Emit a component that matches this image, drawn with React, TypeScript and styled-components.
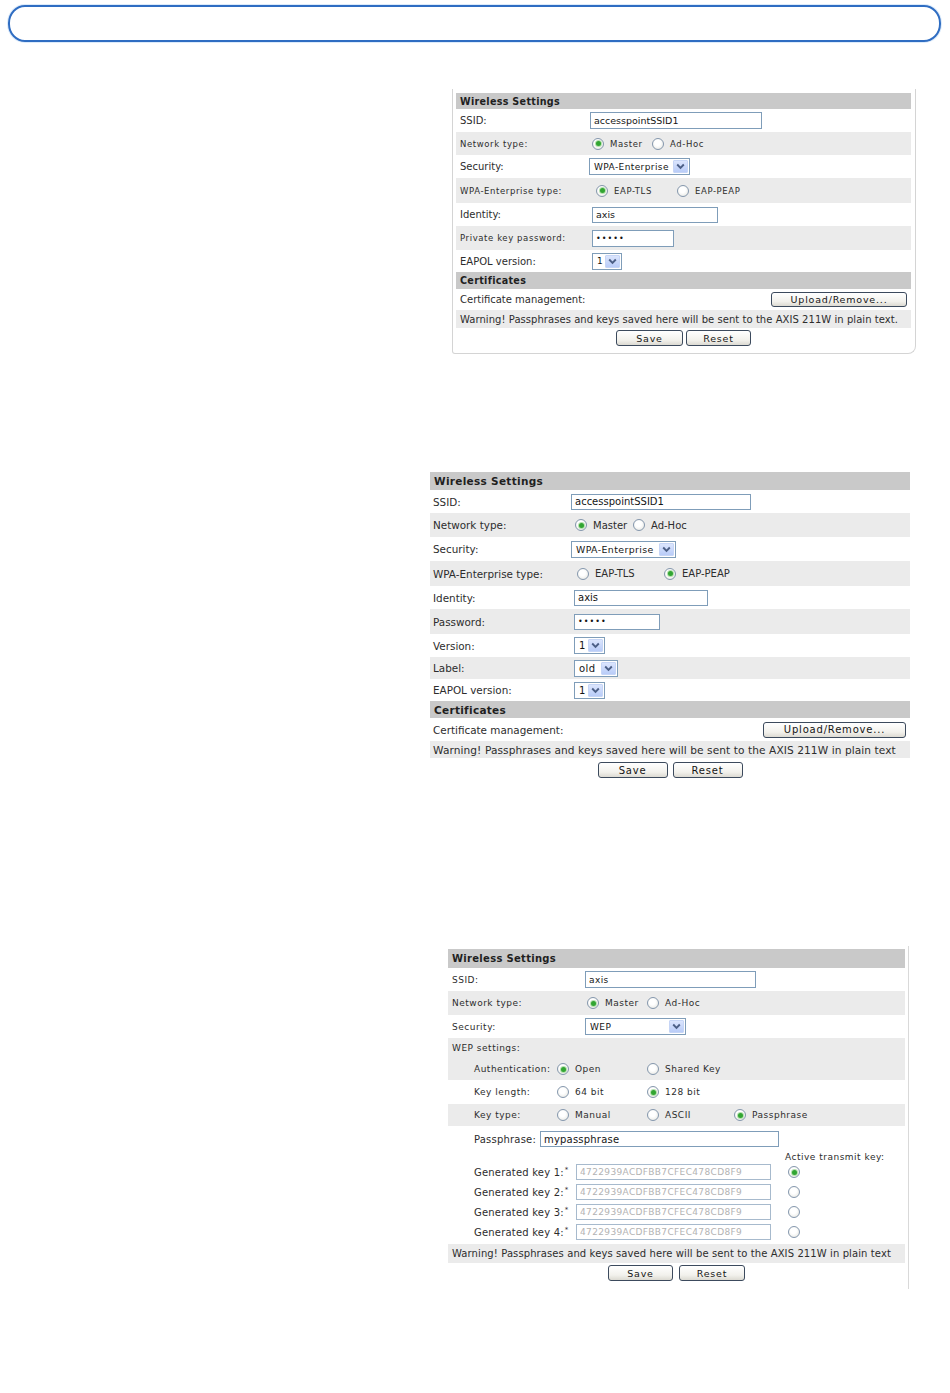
import styled, { createGlobalStyle, css } from "styled-components";

const GlobalStyle = createGlobalStyle`
  html, body {
    margin: 0;
    padding: 0;
    background: #ffffff;
  }
  body {
    font-family: "DejaVu Sans", Verdana, sans-serif;
    color: #2b2b2b;
  }
  * {
    box-sizing: border-box;
  }
`;

const Page = styled.main`
  width: 950px;
  min-height: 1393px;
  padding-top: 5px;
  overflow: hidden;
`;

const TitleBar = styled.header`
  height: 37px;
  margin: 0 9px 0 8px;
  border: 2px solid #2f6dc2;
  border-radius: 17px / 18px;
  box-shadow: 0 0 0 1px #dcebfb;
`;

const Shot = styled.section<{
  $top: number;
  $left: number;
  $width: number;
  $pad: string;
  $frame: "card" | "edge" | "none";
}>`
  margin: ${p => p.$top}px 0 0 ${p => p.$left}px;
  width: ${p => p.$width}px;
  padding: ${p => p.$pad};
  ${p =>
    p.$frame === "card" &&
    css`
      border: 1px solid #d4d4d4;
      border-top: none;
      border-radius: 0 0 8px 3px;
    `}
  ${p =>
    p.$frame === "edge" &&
    css`
      border-right: 1px solid #d9d9d9;
    `}
`;

const Bar = styled.div<{ $h: number; $size: number }>`
  display: flex;
  align-items: center;
  height: ${p => p.$h}px;
  padding-left: 4px;
  background: #c9c9c9;
  font-size: ${p => p.$size}px;
  font-weight: bold;
  letter-spacing: 0.3px;
  color: #1f1f1f;
`;

const Row = styled.div<{ $h: number; $shade?: boolean; $pad?: number; $spread?: boolean }>`
  display: flex;
  align-items: center;
  justify-content: ${p => (p.$spread ? "space-between" : "flex-start")};
  height: ${p => p.$h}px;
  padding: 0 4px 0 ${p => p.$pad ?? 4}px;
  background: ${p => (p.$shade ? "#ebebeb" : "transparent")};
`;

const Label = styled.span<{ $w?: number; $size: number; $track?: number }>`
  flex: none;
  width: ${p => (p.$w ? `${p.$w}px` : "auto")};
  font-size: ${p => p.$size}px;
  letter-spacing: ${p => p.$track ?? 0}px;
  white-space: nowrap;
  color: #2d2d2d;

  sup {
    font-size: 7px;
    vertical-align: 4px;
    margin-left: 1px;
  }
`;

const Field = styled.input<{ $w: number; $h?: number; $size: number; $track?: number; $shift?: number; $muted?: boolean }>`
  flex: none;
  width: ${p => p.$w}px;
  height: ${p => p.$h ?? 16}px;
  margin: 0 0 0 ${p => p.$shift ?? 0}px;
  padding: 0 3px;
  border: 1px solid ${p => (p.$muted ? "#a7bacd" : "#7f9db9")};
  background: #ffffff;
  font-family: inherit;
  font-size: ${p => p.$size}px;
  letter-spacing: ${p => p.$track ?? 0}px;
  color: ${p => (p.$muted ? "#b3b3b3" : "#151515")};
  outline: none;
`;

const Select = styled.div<{ $w: number; $size: number; $shift?: number }>`
  flex: none;
  display: flex;
  align-items: center;
  justify-content: space-between;
  width: ${p => p.$w}px;
  height: 17px;
  margin-left: ${p => p.$shift ?? 0}px;
  padding: 0 1px 0 4px;
  border: 1px solid #7f9db9;
  background: #ffffff;
  font-size: ${p => p.$size}px;
  letter-spacing: 0.4px;
  color: #151515;
`;

const Drop = styled.span`
  display: flex;
  align-items: center;
  justify-content: center;
  width: 15px;
  height: 13px;
  border: 1px solid #c6d5f6;
  border-radius: 1px;
  background: linear-gradient(#dbe5fd, #b9ccf8);
`;

const Option = styled.span<{ $w?: number; $size: number; $track?: number }>`
  flex: none;
  display: inline-flex;
  align-items: center;
  gap: 6px;
  width: ${p => (p.$w ? `${p.$w}px` : "auto")};
  font-size: ${p => p.$size}px;
  letter-spacing: ${p => p.$track ?? 0}px;
  white-space: nowrap;
  color: #2d2d2d;
`;

const Options = styled.span<{ $shift?: number }>`
  display: flex;
  align-items: center;
  margin-left: ${p => p.$shift ?? 0}px;
`;

const Dot = styled.span<{ $on?: boolean; $shift?: number }>`
  flex: none;
  display: flex;
  align-items: center;
  justify-content: center;
  width: 12px;
  height: 12px;
  margin-left: ${p => p.$shift ?? 0}px;
  border: 1px solid #8497ad;
  border-radius: 50%;
  background: radial-gradient(circle at 45% 40%, #ffffff 35%, #e1e1da 100%);

  &::after {
    content: "";
    width: 5px;
    height: 5px;
    border-radius: 50%;
    background: ${p => (p.$on ? "#32a532" : "transparent")};
    box-shadow: ${p => (p.$on ? "0 0 0 1px #b4e0ae" : "none")};
  }
`;

const Btn = styled.button<{ $w: number; $h?: number; $size: number }>`
  flex: none;
  width: ${p => p.$w}px;
  height: ${p => p.$h ?? 16}px;
  padding: 0;
  border: 1px solid #3c4a5d;
  border-radius: 3px;
  background: linear-gradient(#ffffff, #f2f1ec 65%, #dcdad2);
  font-family: inherit;
  font-size: ${p => p.$size}px;
  letter-spacing: 0.8px;
  line-height: 13px;
  color: #151515;
`;

const Actions = styled.div<{ $gap: number; $top: number }>`
  display: flex;
  justify-content: center;
  gap: ${p => p.$gap}px;
  margin-top: ${p => p.$top}px;
`;

const Note = styled.div<{ $h: number; $size: number; $track?: number; $pad?: number; $top?: number }>`
  display: flex;
  align-items: center;
  height: ${p => p.$h}px;
  margin-top: ${p => p.$top ?? 0}px;
  padding-left: ${p => p.$pad ?? 4}px;
  background: #ebebeb;
  font-size: ${p => p.$size}px;
  letter-spacing: ${p => p.$track ?? 0}px;
  white-space: nowrap;
  color: #2d2d2d;
`;

function Arrow() {
  return (
    <svg width="9" height="7" viewBox="0 0 9 7">
      <path d="M1.2 1.5 L4.5 4.8 L7.8 1.5" fill="none" stroke="#4c5f86" strokeWidth="1.9" />
    </svg>
  );
}

function Choice({ w, size, track, on, text }: { w?: number; size: number; track?: number; on?: boolean; text: string }) {
  return (
    <Option $w={w} $size={size} $track={track}>
      <Dot $on={on} />
      {text}
    </Option>
  );
}

function Drop1({ w, size, text, shift }: { w: number; size: number; text: string; shift?: number }) {
  return (
    <Select $w={w} $size={size} $shift={shift}>
      {text}
      <Drop>
        <Arrow />
      </Drop>
    </Select>
  );
}

const WARNING = "Warning! Passphrases and keys saved here will be sent to the AXIS 211W in plain text";
const KEY = "4722939ACDFBB7CFEC478CD8F9";

function EapTls() {
  const big = 10;
  const small = 8.5;
  const sp = 0.6;
  return (
    <Shot $top={47} $left={452} $width={464} $pad="4px 4px 7px 3px" $frame="card">
      <Bar $h={16} $size={9.6}>Wireless Settings</Bar>
      <Row $h={23}>
        <Label $w={130} $size={big}>SSID:</Label>
        <Field readOnly value="accesspointSSID1" $w={172} $h={17} $size={9.5} />
      </Row>
      <Row $h={23} $shade>
        <Label $w={130} $size={small} $track={sp}>Network type:</Label>
        <Options $shift={2}>
          <Choice w={60} size={small} track={sp} on text="Master" />
          <Choice size={small} track={sp} text="Ad-Hoc" />
        </Options>
      </Row>
      <Row $h={23}>
        <Label $w={130} $size={big}>Security:</Label>
        <Drop1 w={101} size={9} text="WPA-Enterprise" shift={-1} />
      </Row>
      <Row $h={25} $shade>
        <Label $w={130} $size={small} $track={sp}>WPA-Enterprise type:</Label>
        <Options $shift={6}>
          <Choice w={81} size={small} track={sp} on text="EAP-TLS" />
          <Choice size={small} track={sp} text="EAP-PEAP" />
        </Options>
      </Row>
      <Row $h={23}>
        <Label $w={130} $size={big}>Identity:</Label>
        <Field readOnly value="axis" $w={126} $size={9.5} $shift={2} />
      </Row>
      <Row $h={24} $shade>
        <Label $w={130} $size={small} $track={sp}>Private key password:</Label>
        <Field readOnly value="•••••" $w={82} $h={17} $size={8} $track={1} $shift={2} />
      </Row>
      <Row $h={22}>
        <Label $w={130} $size={big}>EAPOL version:</Label>
        <Drop1 w={30} size={9} text="1" shift={2} />
      </Row>
      <Bar $h={17} $size={9.6}>Certificates</Bar>
      <Row $h={21} $spread>
        <Label $size={big}>Certificate management:</Label>
        <Btn $w={136} $h={15} $size={9.5}>Upload/Remove...</Btn>
      </Row>
      <Note $h={18} $size={10} $track={0.05}>{WARNING}.</Note>
      <Actions $gap={3} $top={2}>
        <Btn $w={67} $size={9.5}>Save</Btn>
        <Btn $w={65} $size={9.5}>Reset</Btn>
      </Actions>
    </Shot>
  );
}

function EapPeap() {
  const size = 10.4;
  return (
    <Shot $top={118} $left={430} $width={480} $pad="0" $frame="none">
      <Bar $h={18} $size={10.5}>Wireless Settings</Bar>
      <Row $h={23} $pad={3}>
        <Label $w={138} $size={size}>SSID:</Label>
        <Field readOnly value="accesspointSSID1" $w={180} $size={10} />
      </Row>
      <Row $h={24} $pad={3} $shade>
        <Label $w={138} $size={size}>Network type:</Label>
        <Options $shift={4}>
          <Choice w={58} size={10} on text="Master" />
          <Choice size={10} text="Ad-Hoc" />
        </Options>
      </Row>
      <Row $h={24} $pad={3}>
        <Label $w={138} $size={size}>Security:</Label>
        <Drop1 w={105} size={9.4} text="WPA-Enterprise" />
      </Row>
      <Row $h={25} $pad={3} $shade>
        <Label $w={138} $size={size}>WPA-Enterprise type:</Label>
        <Options $shift={6}>
          <Choice w={87} size={10} text="EAP-TLS" />
          <Choice size={10} on text="EAP-PEAP" />
        </Options>
      </Row>
      <Row $h={23} $pad={3}>
        <Label $w={138} $size={size}>Identity:</Label>
        <Field readOnly value="axis" $w={134} $size={10} $shift={3} />
      </Row>
      <Row $h={25} $pad={3} $shade>
        <Label $w={138} $size={size}>Password:</Label>
        <Field readOnly value="•••••" $w={86} $size={8} $track={1} $shift={3} />
      </Row>
      <Row $h={23} $pad={3}>
        <Label $w={138} $size={size}>Version:</Label>
        <Drop1 w={31} size={10} text="1" shift={3} />
      </Row>
      <Row $h={22} $pad={3} $shade>
        <Label $w={138} $size={size}>Label:</Label>
        <Drop1 w={44} size={10} text="old" shift={3} />
      </Row>
      <Row $h={22} $pad={3}>
        <Label $w={138} $size={size}>EAPOL version:</Label>
        <Drop1 w={31} size={10} text="1" shift={3} />
      </Row>
      <Bar $h={17} $size={10.5}>Certificates</Bar>
      <Row $h={23} $pad={3} $spread>
        <Label $size={size}>Certificate management:</Label>
        <Btn $w={143} $size={10}>Upload/Remove...</Btn>
      </Row>
      <Note $h={17} $size={10.6} $track={0.08} $pad={3}>{WARNING}</Note>
      <Actions $gap={5} $top={4}>
        <Btn $w={70} $size={10}>Save</Btn>
        <Btn $w={70} $size={10}>Reset</Btn>
      </Actions>
    </Shot>
  );
}

function Wep() {
  const s = 9;
  const t = 0.5;
  return (
    <Shot $top={168} $left={448} $width={461} $pad="3px 3px 8px 0" $frame="edge">
      <Bar $h={19} $size={10}>Wireless Settings</Bar>
      <Row $h={23}>
        <Label $w={133} $size={s} $track={t}>SSID:</Label>
        <Field readOnly value="axis" $w={171} $h={17} $size={9} $track={0.4} />
      </Row>
      <Row $h={24} $shade>
        <Label $w={133} $size={s} $track={t}>Network type:</Label>
        <Options $shift={2}>
          <Choice w={60} size={s} track={t} on text="Master" />
          <Choice size={s} track={t} text="Ad-Hoc" />
        </Options>
      </Row>
      <Row $h={23}>
        <Label $w={133} $size={s} $track={t}>Security:</Label>
        <Drop1 w={101} size={9} text="WEP" />
      </Row>
      <Row $h={20} $shade>
        <Label $size={s} $track={t}>WEP settings:</Label>
      </Row>
      <Row $h={22} $shade $pad={26}>
        <Label $w={83} $size={s} $track={t}>Authentication:</Label>
        <Choice w={90} size={s} track={t} on text="Open" />
        <Choice size={s} track={t} text="Shared Key" />
      </Row>
      <Row $h={24} $pad={26}>
        <Label $w={83} $size={s} $track={t}>Key length:</Label>
        <Choice w={90} size={s} track={t} text="64 bit" />
        <Choice size={s} track={t} on text="128 bit" />
      </Row>
      <Row $h={22} $shade $pad={26}>
        <Label $w={83} $size={s} $track={t}>Key type:</Label>
        <Choice w={90} size={s} track={t} text="Manual" />
        <Choice w={87} size={s} track={t} text="ASCII" />
        <Choice size={s} track={t} on text="Passphrase" />
      </Row>
      <Row $h={26} $pad={26}>
        <Label $w={66} $size={10} $track={0.2}>Passphrase:</Label>
        <Field readOnly value="mypassphrase" $w={239} $size={10} $track={0.2} />
      </Row>
      <Row $h={10} $pad={337}>
        <Label $size={s} $track={t}>Active transmit key:</Label>
      </Row>
      {[1, 2, 3, 4].map(n => (
        <Row key={n} $h={20} $pad={26}>
          <Label $w={102} $size={10} $track={0.2}>
            Generated key {n}:<sup>*</sup>
          </Label>
          <Field readOnly value={KEY} $w={195} $size={9} $track={0.35} $muted />
          <Dot $on={n === 1} $shift={17} />
        </Row>
      ))}
      <Note $h={19} $size={10} $track={0.1} $top={2}>{WARNING}</Note>
      <Actions $gap={6} $top={2}>
        <Btn $w={65} $size={9.5}>Save</Btn>
        <Btn $w={66} $size={9.5}>Reset</Btn>
      </Actions>
    </Shot>
  );
}

export default function App() {
  return (
    <>
      <GlobalStyle />
      <Page>
        <TitleBar />
        <EapTls />
        <EapPeap />
        <Wep />
      </Page>
    </>
  );
}
